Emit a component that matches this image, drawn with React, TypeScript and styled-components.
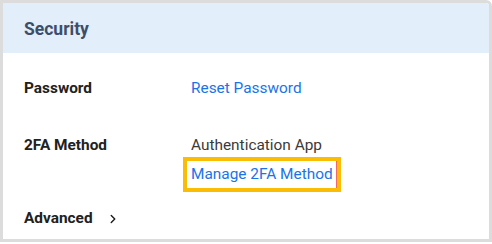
import React from "react";
import styled, { createGlobalStyle } from "styled-components";
import { ChevronRight } from "lucide-react";

const GlobalStyle = createGlobalStyle`
  html, body {
    margin: 0;
    padding: 0;
    background: #ffffff;
    font-family: Roboto, "Liberation Sans", sans-serif;
  }
`;

const Card = styled.div`
  width: 486px;
  height: 236px;
  border: 3px solid #dcdcdc;
  border-radius: 0 6px 0 0;
  background: #ffffff;
  overflow: hidden;
`;

const Header = styled.div`
  height: 50px;
  display: flex;
  align-items: center;
  padding: 1px 21px 0;
  box-sizing: border-box;
  background: #e3eefb;
  font-size: 17.5px;
  font-weight: 700;
  color: #3d4e69;
`;

const Body = styled.div`
  padding: 25px 21px 0;
  display: flex;
  flex-direction: column;
`;

const Row = styled.div<{ $gap: number }>`
  display: grid;
  grid-template-columns: 167px 1fr;
  margin-bottom: ${(p) => p.$gap}px;
`;

const Label = styled.div`
  font-size: 15.4px;
  font-weight: 700;
  line-height: 21px;
  color: #212121;
`;

const Value = styled.div`
  display: flex;
  flex-direction: column;
  align-items: flex-start;
`;

const Text = styled.span`
  font-size: 15.4px;
  line-height: 21px;
  color: #3a3a3a;
`;

const Link = styled.a`
  font-size: 15.4px;
  line-height: 21px;
  color: #1a73e8;
  text-decoration: none;
  cursor: pointer;
`;

const Highlight = styled.div`
  margin: 1px 0 0 -8px;
  border: 4px solid #fbbc04;
  padding: 3px 4px 3px;
  background: #ffffff;
  box-shadow: inset -1px 0 0 #f06a6a;
`;

const Advanced = styled.div`
  display: flex;
  align-items: center;
  gap: 13px;
  font-size: 15.4px;
  font-weight: 700;
  line-height: 21px;
  color: #212121;
`;

export default function App() {
  return (
    <>
      <GlobalStyle />
      <Card>
        <Header>Security</Header>
        <Body>
          <Row $gap={36}>
            <Label>Password</Label>
            <Value>
              <Link>Reset Password</Link>
            </Value>
          </Row>
          <Row $gap={16}>
            <Label>2FA Method</Label>
            <Value>
              <Text>Authentication App</Text>
              <Highlight>
                <Link>Manage 2FA Method</Link>
              </Highlight>
            </Value>
          </Row>
          <Advanced>
            Advanced
            <ChevronRight size={14} strokeWidth={2.5} color="#212121" />
          </Advanced>
        </Body>
      </Card>
    </>
  );
}
